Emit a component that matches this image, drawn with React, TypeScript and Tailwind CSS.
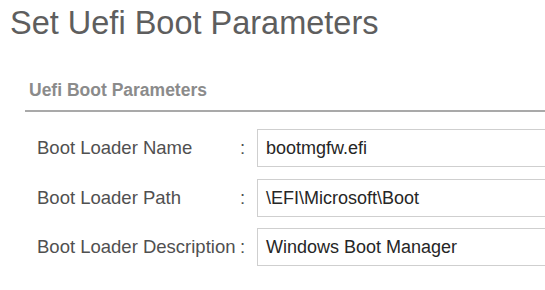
export default function App() {
  const rows = [
    { label: "Boot Loader Name", value: "bootmgfw.efi" },
    { label: "Boot Loader Path", value: "\\EFI\\Microsoft\\Boot" },
    { label: "Boot Loader Description", value: "Windows Boot Manager" },
  ];
  return (
    <div
      className="w-[545px] h-[290px] overflow-hidden bg-white"
      style={{ fontFamily: '"Liberation Sans", Arial, sans-serif' }}
    >
      <div className="pl-[10px] pt-[5px] text-[32.5px] leading-[36px] text-[#5e5e5e] whitespace-nowrap">
        Set Uefi Boot Parameters
      </div>
      <div className="ml-[25px] mt-[39px]">
        <div className="pl-[4px] pb-[10px] text-[17.5px] leading-[20px] font-bold text-[#8b8b8b] border-b-2 border-[#a9a9a9] whitespace-nowrap">
          Uefi Boot Parameters
        </div>
        <div className="mt-[17px] flex flex-col gap-[11.5px]">
          {rows.map((r) => (
            <div key={r.label} className="flex items-center h-[38px] pl-[12px] whitespace-nowrap">
              <span className="w-[203px] shrink-0 text-[18.5px] leading-[22px] text-[#505050]">{r.label}</span>
              <span className="w-[5px] shrink-0 text-[18.5px] leading-[22px] text-[#505050]">:</span>
              <div className="ml-[12px] w-[320px] h-[38px] shrink-0 border border-[#cfcfcf] flex items-center pl-[8px] text-[18px] leading-[22px] text-[#262626]">
                {r.value}
              </div>
            </div>
          ))}
        </div>
      </div>
    </div>
  );
}
